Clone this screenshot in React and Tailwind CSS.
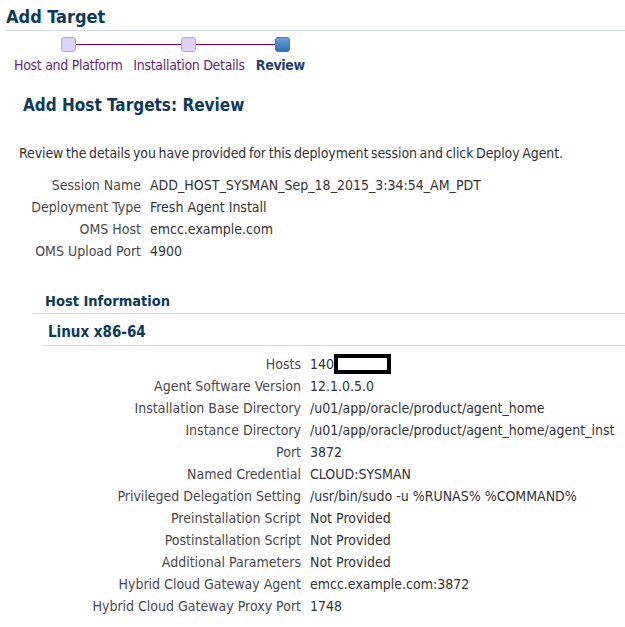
const general = [
  ["Session Name", "ADD_HOST_SYSMAN_Sep_18_2015_3:34:54_AM_PDT"],
  ["Deployment Type", "Fresh Agent Install"],
  ["OMS Host", "emcc.example.com"],
  ["OMS Upload Port", "4900"],
];

const hostRows = [
  ["Agent Software Version", "12.1.0.5.0"],
  ["Installation Base Directory", "/u01/app/oracle/product/agent_home"],
  ["Instance Directory", "/u01/app/oracle/product/agent_home/agent_inst"],
  ["Port", "3872"],
  ["Named Credential", "CLOUD:SYSMAN"],
  ["Privileged Delegation Setting", "/usr/bin/sudo -u %RUNAS% %COMMAND%"],
  ["Preinstallation Script", "Not Provided"],
  ["Postinstallation Script", "Not Provided"],
  ["Additional Parameters", "Not Provided"],
  ["Hybrid Cloud Gateway Agent", "emcc.example.com:3872"],
  ["Hybrid Cloud Gateway Proxy Port", "1748"],
];

function Step({ done }) {
  return (
    <div
      className={`w-[15px] h-[15px] rounded-[3px] border ${
        done
          ? "bg-[#ddd2fa] border-[#b9a0ee]"
          : "bg-gradient-to-b from-[#6aa3dc] to-[#2f6fb5] border-[#3a78bb]"
      }`}
    />
  );
}

export default function App() {
  return (
    <div className="w-[625px] h-[627px] bg-white text-[14px] text-[#333] font-['DejaVu_Sans_Condensed','DejaVu_Sans',sans-serif] overflow-hidden">
      {/* page title */}
      <div className="ml-[6px] pt-[6px] pb-[2px] border-b border-[#d5dde5]">
        <h1 className="text-[18px] font-bold text-[#0b3a5c] leading-[22px]">Add Target</h1>
      </div>

      {/* train */}
      <div className="relative h-[46px]">
        <div className="absolute left-[68px] right-[342px] top-[13px] h-px bg-[#660066]" />
        <div className="absolute left-[61px] top-[6px]"><Step done /></div>
        <div className="absolute left-[181px] top-[6px]"><Step done /></div>
        <div className="absolute left-[275px] top-[6px]"><Step /></div>
        <div className="absolute left-[14px] top-[26px] flex gap-[11px] leading-[16px] tracking-[-0.3px]">
          <span className="text-[#6b1f7c]">Host and Platform</span>
          <span className="text-[#6b1f7c]">Installation Details</span>
          <span className="font-bold text-[#1f3f6e]">Review</span>
        </div>
      </div>

      <h2 className="ml-[23px] mt-[17px] text-[17px] font-bold text-[#0b3a5c] leading-[22px]">
        Add Host Targets: Review
      </h2>

      <p className="ml-[19px] mt-[29px] leading-[16px] tracking-[-0.1px] [word-spacing:-1.2px]">
        Review the details you have provided for this deployment session and click Deploy Agent.
      </p>

      <div className="mt-[16px] grid grid-cols-[141px_1fr] gap-x-[9px] gap-y-[6px] leading-[16px]">
        {general.map(([k, v]) => (
          <div key={k} className="contents">
            <span className="text-right text-[#4a4a4a]">{k}</span>
            <span>{v}</span>
          </div>
        ))}
      </div>

      <div className="ml-[32px] mt-[33px] border-b border-[#d5dde5] pl-[13px] pb-[3px]">
        <h3 className="text-[14.5px] font-bold text-[#0b3a5c] leading-[18px]">Host Information</h3>
      </div>
      <div className="ml-[42px] mt-[9px] border-b border-[#d5dde5] pl-[6px] pb-[4px]">
        <h4 className="text-[15px] font-bold text-[#0b3a5c] leading-[18px]">Linux x86-64</h4>
      </div>

      <div className="mt-[10px] grid grid-cols-[301px_1fr] gap-x-[9px] gap-y-[6px] leading-[16px]">
        <span className="text-right text-[#4a4a4a]">Hosts</span>
        <span className="flex items-center">
          140
          <span className="inline-block w-[57px] h-[20px] -my-[2px] border-[4px] border-black bg-white" />
        </span>
        {hostRows.map(([k, v]) => (
          <div key={k} className="contents">
            <span className="text-right text-[#4a4a4a]">{k}</span>
            <span>{v}</span>
          </div>
        ))}
      </div>
    </div>
  );
}
